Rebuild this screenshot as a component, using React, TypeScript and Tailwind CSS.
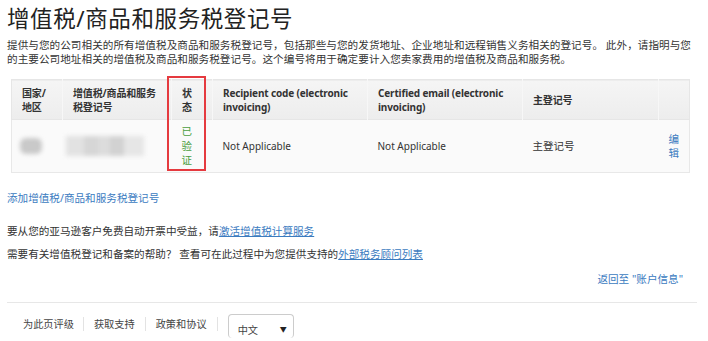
import { ChevronDown } from "lucide-react";

const font = "font-['Noto_Sans','Noto_Sans_CJK_SC',sans-serif]";

export default function App() {
  return (
    <div className={`${font} w-[708px] h-[341px] overflow-hidden bg-white text-[#333] px-[7px]`}>
      <h1 className="pt-[5px] text-[22.5px] leading-[28px] text-[#222] tracking-[0.6px]">
        增值税/商品和服务税登记号
      </h1>
      <p className="mt-[5px] text-[10.6px] leading-[14px] tracking-[0.05px]">
        提供与您的公司相关的所有增值税及商品和服务税登记号，包括那些与您的发货地址、企业地址和远程销售义务相关的登记号。 此外，请指明与您的主要公司地址相关的增值税及商品和服务税登记号。这个编号将用于确定要计入您卖家费用的增值税及商品和服务税。
      </p>

      <div className="relative ml-[4px] mt-[13px] w-[678px]">
        <table className="w-full table-fixed border-collapse text-[10px] leading-[14px]">
          <colgroup>
            <col className="w-[51px]" />
            <col className="w-[109px]" />
            <col className="w-[41px]" />
            <col className="w-[155px]" />
            <col className="w-[155px]" />
            <col className="w-[136px]" />
            <col className="w-[31px]" />
          </colgroup>
          <thead>
            <tr className="h-[40px] bg-gradient-to-b from-[#f5f5f5] to-[#ededed] border border-[#e6e6e6] text-left text-[#333] tracking-[-0.15px]">
              <th className="px-[10px] border-r border-[#f7f7f7] font-bold">国家/地区</th>
              <th className="px-[10px] border-r border-[#f7f7f7] font-bold">增值税/商品和服务税登记号</th>
              <th className="pl-[10px] pr-[14px] border-r border-[#f7f7f7] font-bold">状态</th>
              <th className="pl-[10px] pr-[6px] border-r border-[#f7f7f7] font-bold">Recipient code (electronic invoicing)</th>
              <th className="pl-[10px] pr-[6px] border-r border-[#f7f7f7] font-bold">Certified email (electronic invoicing)</th>
              <th className="px-[10px] border-r border-[#f7f7f7] font-bold">主登记号</th>
              <th className="px-[10px]"></th>
            </tr>
          </thead>
          <tbody>
            <tr className="h-[53px] bg-[#fafafa] border border-[#e8e8e8]">
              <td className="pl-[8px]">
                <div className="h-[16px] w-[22px] rounded-[6px] bg-[#c9c9c9] blur-[2px]" />
              </td>
              <td className="pl-[3px]">
                <div className="flex h-[20px] w-[78px] blur-[2px]">
                  <div className="w-[18px] bg-[#e2e2e2]" />
                  <div className="w-[14px] bg-[#d6d6d6]" />
                  <div className="w-[12px] bg-[#dcdcdc]" />
                  <div className="w-[14px] bg-[#d2d2d2]" />
                  <div className="w-[20px] bg-[#e6e6e6]" />
                </div>
              </td>
              <td className="pl-[10px] pr-[14px] text-[10.5px] text-[#4a9e3f] leading-[14.5px]">已验证</td>
              <td className="px-[10px]">Not Applicable</td>
              <td className="px-[10px]">Not Applicable</td>
              <td className="px-[10px] text-[10.5px]">主登记号</td>
              <td className="px-[10px] text-[10.5px] text-[#3b7bbf]">编辑</td>
            </tr>
          </tbody>
        </table>
        <div className="absolute left-[156px] top-[-3px] h-[95px] w-[39px] border-2 border-[#e53a3f]" />
      </div>

      <a className="mt-[18px] block text-[10.6px] leading-[14px] text-[#3b7bbf]">
        添加增值税/商品和服务税登记号
      </a>
      <p className="mt-[19px] text-[10.6px] leading-[14px]">
        要从您的亚马逊客户免费自动开票中受益，请
        <a className="text-[#3b7bbf] underline">激活增值税计算服务</a>
      </p>
      <p className="mt-[9px] text-[10.6px] leading-[14px]">
        需要有关增值税登记和备案的帮助？ 查看可在此过程中为您提供支持的
        <a className="text-[#3b7bbf] underline">外部税务顾问列表</a>
      </p>
      <div className="mt-[11px] flex justify-end pr-[18px] text-[10.6px] leading-[14px] text-[#3b7bbf]">
        返回至 "账户信息"
      </div>

      <div className="mt-[16px] h-px w-[690px] bg-[#e7e7e7]" />

      <div className="mt-[11px] flex items-start text-[10.2px] leading-[14px] text-[#444]">
        <span className="mt-[3px] pl-[16px] pr-[9px] border-r border-[#e3e3e3]">为此页评级</span>
        <span className="mt-[3px] px-[10px] border-r border-[#e3e3e3]">获取支持</span>
        <span className="mt-[3px] px-[10px] border-r border-[#e3e3e3]">政策和协议</span>
        <div className="ml-[10px] flex h-[24px] w-[66px] items-center justify-between rounded-sm border border-[#ccc] border-b-0 bg-white pl-[9px] pr-[6px] pt-[6px]">
          <span>中文</span>
          <ChevronDown className="hidden" />
          <span className="text-[7px] text-[#222]">▼</span>
        </div>
      </div>
    </div>
  );
}
